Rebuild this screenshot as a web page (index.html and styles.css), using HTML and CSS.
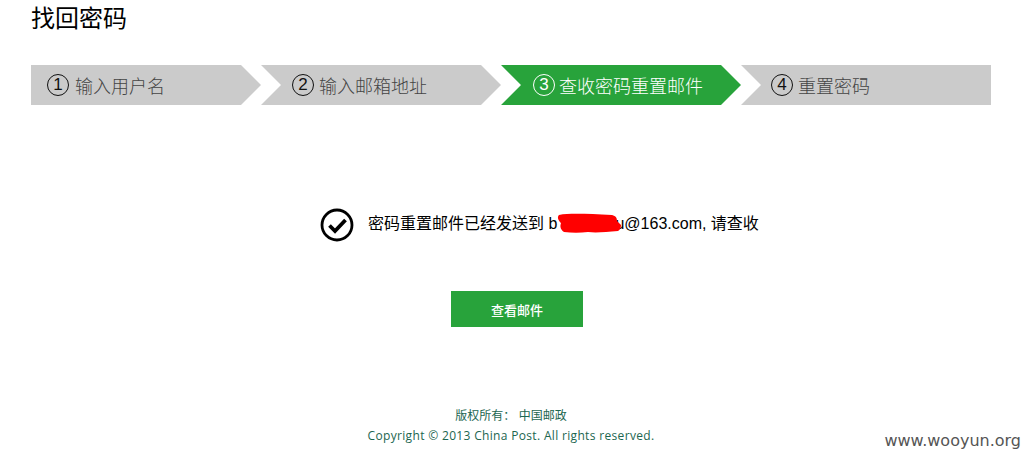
FILE: index.html
```html
<!DOCTYPE html>
<html lang="zh-CN">
<head>
<meta charset="utf-8">
<title>找回密码</title>
<link rel="stylesheet" href="styles.css">
</head>
<body>
<div class="page">
  <h1 class="title">找回密码</h1>
  <ol class="steps">
    <li class="step step-first"><span class="num">1</span>输入用户名</li>
    <li class="step"><span class="num">2</span>输入邮箱地址</li>
    <li class="step step-active"><span class="num">3</span>查收密码重置邮件</li>
    <li class="step step-last"><span class="num">4</span>重置密码</li>
  </ol>
  <div class="message">
    <svg class="check" width="34" height="34" viewBox="0 0 34 34" aria-hidden="true">
      <circle cx="17" cy="17" r="15" fill="none" stroke="#000" stroke-width="2.8"/>
      <path d="M9.5 17.5l5.5 5.5 10.5-11" fill="none" stroke="#000" stroke-width="3.8"/>
    </svg>
    <p class="message-text">密码重置邮件已经发送到 b<span class="redact"><svg class="scribble" width="66" height="24" viewBox="0 0 66 24" aria-hidden="true"><path d="M3 3C14 1 32 2 56 3c4 1 5 3 5 6l4 4c0 3-1 5-3 6-12 1-22 2-30 1-8 1-16 1-24 0C4 17 4 14 5 11 2 8 1 5 3 3z" fill="#f00"/></svg></span>u@163.com, 请查收</p>
  </div>
  <a class="button" href="#">查看邮件</a>
  <footer class="footer">
    <p class="footer-line">版权所有： 中国邮政</p>
    <p class="footer-line footer-en">Copyright © 2013 China Post. All rights reserved.</p>
  </footer>
</div>
<div class="watermark">www.wooyun.org</div>
</body>
</html>
```
FILE: styles.css
```css
html, body {
  margin: 0;
  padding: 0;
  height: 450px;
  overflow: hidden;
  background: #fff;
}
body {
  position: relative;
  font-family: "Liberation Sans", "Noto Sans CJK SC", sans-serif;
}
.page {
  display: flex;
  flex-direction: column;
  align-items: center;
  padding: 0 31px;
}
.title {
  align-self: stretch;
  margin: 1px 0 0;
  font-size: 24px;
  line-height: 36px;
  font-weight: 400;
  color: #000;
}
.steps {
  display: flex;
  align-self: stretch;
  list-style: none;
  margin: 28px 0 0;
  padding: 0;
  height: 40px;
}
.step {
  display: flex;
  align-items: center;
  flex: 0 0 240px;
  box-sizing: border-box;
  padding-left: 31px;
  background: #cbcbcb;
  color: #444;
  font-size: 18px;
  font-weight: 300;
  clip-path: polygon(0 0, 220px 0, 100% 50%, 220px 100%, 0 100%, 20px 50%);
}
.step-first {
  flex-basis: 230px;
  padding-left: 16px;
  clip-path: polygon(0 0, 210px 0, 100% 50%, 210px 100%, 0 100%);
}
.step-active {
  background: #28a33b;
  color: #fff;
  padding-left: 32px;
}
.step-last {
  flex-basis: 250px;
  padding-left: 30px;
  clip-path: polygon(0 0, 100% 0, 100% 100%, 0 100%, 20px 50%);
}
.num {
  display: flex;
  align-items: center;
  justify-content: center;
  box-sizing: border-box;
  width: 22px;
  height: 22px;
  margin-right: 5px;
  border: 1.5px solid #111;
  border-radius: 50%;
  color: #111;
  font-size: 17px;
  font-weight: 400;
}
.step-first .num {
  margin-right: 6px;
}
.step-active .num {
  margin-right: 4px;
  border-color: #fff;
  color: #fff;
}
.message {
  display: flex;
  align-items: center;
  gap: 14px;
  margin-top: 103px;
  margin-left: 57px;
}
.check {
  flex: none;
}
.message-text {
  margin: 0 0 2px;
  font-size: 16px;
  line-height: 24px;
  color: #000;
}
.redact {
  position: relative;
  display: inline-block;
  width: 58px;
  height: 1px;
}
.scribble {
  position: absolute;
  left: -1px;
  top: -16px;
}
.button {
  display: flex;
  align-items: center;
  justify-content: center;
  width: 132px;
  height: 36px;
  margin-top: 49px;
  margin-left: 12px;
  background: #28a33b;
  color: #fff;
  font-size: 13px;
  font-weight: 500;
  text-decoration: none;
}
.footer {
  margin-top: 80px;
  text-align: center;
  color: #1c6650;
  font-size: 12px;
}
.footer-line {
  margin: 0;
  height: 19px;
  line-height: 19px;
}
.footer-en {
  font-family: "Open Sans", "Noto Sans CJK SC", sans-serif;
  letter-spacing: 0.33px;
}
.watermark {
  position: absolute;
  right: 1px;
  top: 431px;
  font-family: "DejaVu Sans", sans-serif;
  font-size: 16px;
  line-height: 20px;
  color: #555;
}
```
